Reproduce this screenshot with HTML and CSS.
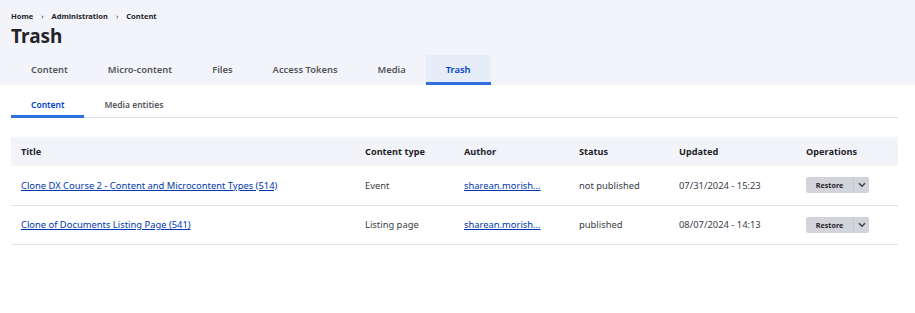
FILE: index.html
```html
<!DOCTYPE html>
<html>
<head>
<meta charset="utf-8">
<link rel="stylesheet" href="styles.css">
</head>
<body>
<div class="header">
  <nav class="breadcrumb">
    <span>Home</span><span class="sep">›</span><span>Administration</span><span class="sep">›</span><span>Content</span>
  </nav>
  <h1 class="title">Trash</h1>
  <ul class="tabs">
    <li class="tab">Content</li>
    <li class="tab">Micro-content</li>
    <li class="tab">Files</li>
    <li class="tab">Access Tokens</li>
    <li class="tab">Media</li>
    <li class="tab active">Trash</li>
  </ul>
</div>
<div class="main">
  <ul class="subtabs">
    <li class="subtab active">Content</li>
    <li class="subtab">Media entities</li>
  </ul>
  <table class="list">
    <thead>
      <tr>
        <th class="c-title">Title</th>
        <th class="c-type">Content type</th>
        <th class="c-author">Author</th>
        <th class="c-status">Status</th>
        <th class="c-updated">Updated</th>
        <th class="c-ops">Operations</th>
      </tr>
    </thead>
    <tbody>
      <tr>
        <td><a href="#">Clone DX Course 2 - Content and Microcontent Types (514)</a></td>
        <td>Event</td>
        <td><a href="#">sharean.morish...</a></td>
        <td>not published</td>
        <td>07/31/2024 - 15:23</td>
        <td><div class="dropbutton"><span class="db-main">Restore</span><span class="db-toggle"><svg width="8" height="6" viewBox="0 0 8 6"><path d="M1 1.2 L4 4.2 L7 1.2" fill="none" stroke="#3b3d45" stroke-width="1.4"/></svg></span></div></td>
      </tr>
      <tr>
        <td><a href="#">Clone of Documents Listing Page (541)</a></td>
        <td>Listing page</td>
        <td><a href="#">sharean.morish...</a></td>
        <td>published</td>
        <td>08/07/2024 - 14:13</td>
        <td><div class="dropbutton"><span class="db-main">Restore</span><span class="db-toggle"><svg width="8" height="6" viewBox="0 0 8 6"><path d="M1 1.2 L4 4.2 L7 1.2" fill="none" stroke="#3b3d45" stroke-width="1.4"/></svg></span></div></td>
      </tr>
    </tbody>
  </table>
</div>
</body>
</html>
```
FILE: styles.css
```css
* { box-sizing: border-box; }
html, body { margin: 0; padding: 0; background: #fff; }
body {
  font-family: "Noto Sans", "Open Sans", sans-serif;
  color: #232429;
  font-size: 9.4px;
}
.header {
  background: #f3f4f9;
  padding: 10px 0 0 11px;
}
.breadcrumb {
  display: flex;
  font-size: 7.5px;
  font-weight: 700;
  line-height: 12px;
  height: 12px;
}
.breadcrumb .sep {
  font-weight: 400;
  padding: 0 8px;
}
.title {
  margin: 2px 0 0;
  font-size: 19px;
  line-height: 24px;
  font-weight: 700;
  height: 31px;
}
.tabs {
  display: flex;
  list-style: none;
  margin: 0;
  padding: 0;
}
.tab {
  padding: 0 20px;
  height: 30px;
  font-size: 9.4px;
  font-weight: 600;
  color: #55565b;
  border-bottom: 3px solid transparent;
  line-height: 29px;
}
.tab.active {
  background: #e6ecf8;
  color: #003ecc;
  border-bottom-color: #2f6fe0;
}
.main {
  padding: 8px 17px 0 11px;
}
.subtabs {
  display: flex;
  list-style: none;
  margin: 0;
  padding: 0;
  border-bottom: 1px solid #dedfe4;
}
.subtab {
  padding: 0 20px;
  height: 25px;
  line-height: 23px;
  font-size: 8.5px;
  font-weight: 600;
  color: #55565b;
  border-bottom: 2px solid transparent;
  margin-bottom: -1px;
}
.subtab.active {
  color: #003ecc;
  border-bottom: 3px solid #2f6fe0;
}
.list {
  margin-top: 19px;
  width: 887px;
  border-collapse: collapse;
  table-layout: fixed;
}
.list th {
  background: #f3f4f9;
  text-align: left;
  font-weight: 700;
  font-size: 9.2px;
  height: 29px;
  padding: 0 10px;
}
.list td {
  height: 39px;
  padding: 0 10px;
  border-bottom: 1px solid #e2e3e8;
  font-size: 9.4px;
  color: #3b3d45;
  white-space: nowrap;
}
.list a { color: #0036b1; }
.c-title { width: 344px; }
.c-type { width: 99px; }
.c-author { width: 115px; }
.c-status { width: 100px; }
.c-updated { width: 127px; }
.c-ops { width: 102px; }
.dropbutton {
  display: inline-flex;
  height: 16px;
  background: #d3d4d9;
  border-radius: 2px;
  font-size: 7.2px;
  font-weight: 700;
  color: #232429;
  line-height: 16px;
}
.db-main {
  width: 48px;
  text-align: center;
  border-right: 1px solid #c5c6cb;
}
.db-toggle {
  width: 15px;
  display: flex;
  align-items: center;
  justify-content: center;
}
```
